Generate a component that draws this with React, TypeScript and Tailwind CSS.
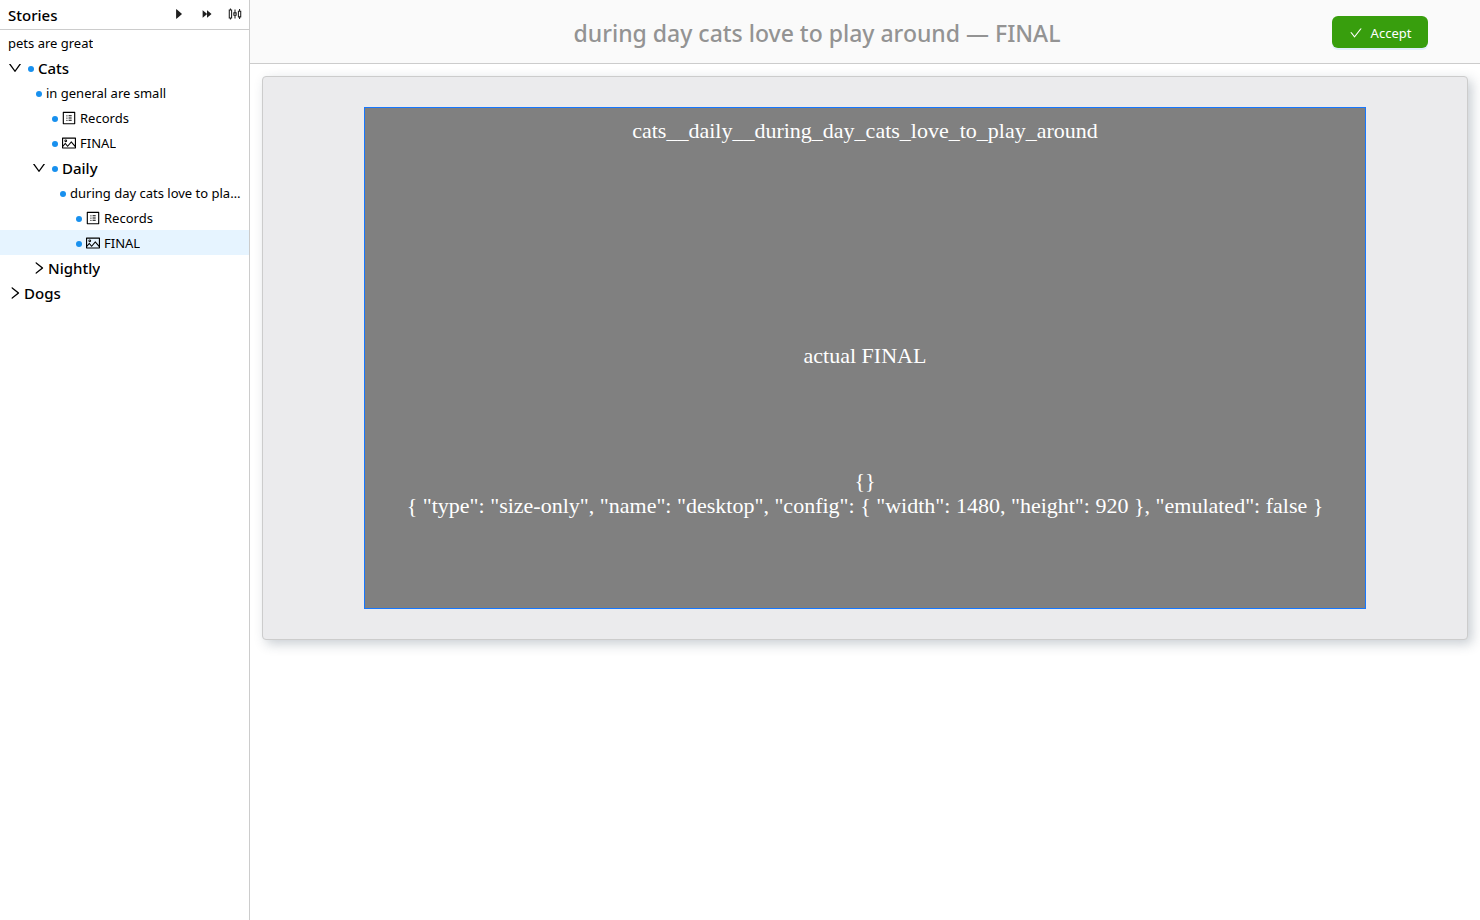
import type { ReactNode } from 'react';
import {
  AiFillCaretRight,
  AiFillForward,
  AiOutlineCheck,
  AiOutlineDown,
  AiOutlinePicture,
  AiOutlineProfile,
  AiOutlineRight,
  AiOutlineSliders,
} from 'react-icons/ai';

function Dot() {
  return <span className="mt-0.5 size-1.5 shrink-0 rounded-full bg-[#1890ee]" />;
}

function Row({ indent, gap, selected, children }: { indent: string; gap: string; selected?: boolean; children: ReactNode }) {
  return (
    <li>
      <button
        type="button"
        aria-current={selected ? 'true' : undefined}
        className={`flex h-[25px] w-full items-center pr-0.5 text-left ${indent} ${gap} ${selected ? 'bg-[#e6f4ff]' : ''}`}
      >
        {children}
      </button>
    </li>
  );
}

function Label({ children }: { children: ReactNode }) {
  return <span className="truncate text-[13px] leading-6">{children}</span>;
}

function GroupLabel({ children }: { children: ReactNode }) {
  return <span className="truncate text-[15px] leading-6 font-medium">{children}</span>;
}

function ToolButton({ label, children }: { label: string; children: ReactNode }) {
  return (
    <button type="button" aria-label={label} className="flex size-4 items-center justify-center">
      {children}
    </button>
  );
}

function Sidebar() {
  return (
    <aside className="flex w-[250px] shrink-0 flex-col border-r border-[#cccccc] bg-white text-black">
      <header className="flex h-[30px] items-center border-b border-[#cccccc] pr-1.5 pl-2">
        <h2 className="grow text-[15px] leading-6 font-medium">Stories</h2>
        <div className="flex items-center gap-3 pb-0.5 text-[#1f1f1f]">
          <ToolButton label="Run"><AiFillCaretRight size={14} /></ToolButton>
          <ToolButton label="Run all"><AiFillForward size={14} /></ToolButton>
          <ToolButton label="Settings"><AiOutlineSliders size={16} /></ToolButton>
        </div>
      </header>
      <nav aria-label="Stories">
        <ul>
          <Row indent="pl-2" gap="gap-1"><Label>pets are great</Label></Row>
          <Row indent="pl-[7px]" gap="gap-1">
            <AiOutlineDown size={16} className="mr-px shrink-0" /><Dot /><GroupLabel>Cats</GroupLabel>
          </Row>
          <Row indent="pl-9" gap="gap-1"><Dot /><Label>in general are small</Label></Row>
          <Row indent="pl-[52px]" gap="gap-[3px]">
            <Dot /><AiOutlineProfile size={16} className="shrink-0" /><Label>Records</Label>
          </Row>
          <Row indent="pl-[52px]" gap="gap-[3px]">
            <Dot /><AiOutlinePicture size={16} className="shrink-0" /><Label>FINAL</Label>
          </Row>
          <Row indent="pl-[31px]" gap="gap-1">
            <AiOutlineDown size={16} className="mr-px shrink-0" /><Dot /><GroupLabel>Daily</GroupLabel>
          </Row>
          <Row indent="pl-[60px]" gap="gap-1"><Dot /><Label>during day cats love to play around</Label></Row>
          <Row indent="pl-[76px]" gap="gap-[3px]">
            <Dot /><AiOutlineProfile size={16} className="shrink-0" /><Label>Records</Label>
          </Row>
          <Row indent="pl-[76px]" gap="gap-[3px]" selected>
            <Dot /><AiOutlinePicture size={16} className="shrink-0" /><Label>FINAL</Label>
          </Row>
          <Row indent="pl-[31px]" gap="gap-px">
            <AiOutlineRight size={16} className="shrink-0" /><GroupLabel>Nightly</GroupLabel>
          </Row>
          <Row indent="pl-[7px]" gap="gap-px">
            <AiOutlineRight size={16} className="shrink-0" /><GroupLabel>Dogs</GroupLabel>
          </Row>
        </ul>
      </nav>
    </aside>
  );
}

function Screenshot() {
  return (
    <figure className="mx-auto flex h-[502px] max-w-[1002px] flex-col border border-[#1677ff] bg-[#808080] text-center font-['Liberation_Serif',serif] text-[22px] leading-[25px] text-white">
      <p className="mt-[10px]">cats__daily__during_day_cats_love_to_play_around</p>
      <p className="mt-[200px]">actual FINAL</p>
      <p className="mt-[100px]">{'{}'}</p>
      <p>{'{ "type": "size-only", "name": "desktop", "config": { "width": 1480, "height": 920 }, "emulated": false }'}</p>
    </figure>
  );
}

export default function App() {
  return (
    <div className="flex min-h-screen bg-white font-['Noto_Sans',sans-serif]">
      <Sidebar />
      <main className="min-w-0 grow">
        <header className="flex h-16 items-center border-b border-[#cccccc] bg-[#fafafa] px-[52px]">
          <h1 className="grow pt-0.5 text-center text-[23px] leading-8 font-medium text-[#939393]">
            during day cats love to play around — FINAL
          </h1>
          <button
            type="button"
            className="flex h-8 min-w-24 items-center justify-center gap-2 rounded-md bg-[#389e0d] pt-0.5 text-[13px] leading-5 text-white shadow-[0_2px_0_rgba(5,145,255,0.1)]"
          >
            <AiOutlineCheck size={14} />
            Accept
          </button>
        </header>
        <section className="m-3 rounded border border-[#cccccc] bg-[#ebebed] p-[30px] shadow-[4px_4px_12px_rgba(40,60,80,0.25)]">
          <Screenshot />
        </section>
      </main>
    </div>
  );
}
